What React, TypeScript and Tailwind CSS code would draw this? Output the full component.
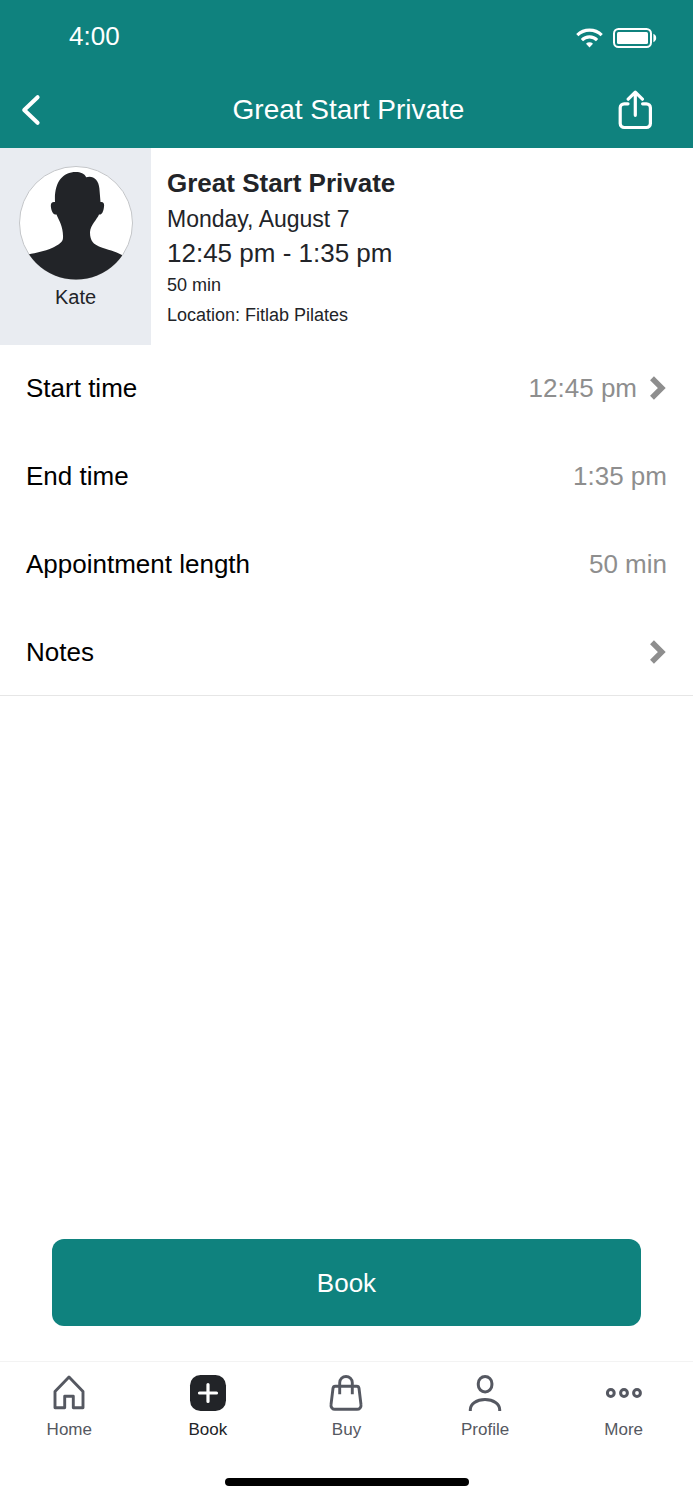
import type { ReactNode } from 'react'

interface RowProps {
  label: string
  value?: string
  onOpen?: () => void
}

interface Tab {
  label: string
  icon: ReactNode
  active?: boolean
}

const ROWS: RowProps[] = [
  { label: 'Start time', value: '12:45 pm', onOpen: () => {} },
  { label: 'End time', value: '1:35 pm' },
  { label: 'Appointment length', value: '50 min' },
  { label: 'Notes', onOpen: () => {} },
]

const TABS: Tab[] = [
  {
    label: 'Home',
    icon: (
      <svg width="38" height="38" viewBox="0 0 38 38" fill="none" stroke="currentColor" strokeWidth="2.9" strokeLinejoin="round">
        <path d="M5 17.500 19 3l14 14.500v16.200h-9.700V22.300h-8.600v11.400H5z" />
      </svg>
    ),
  },
  {
    label: 'Book',
    active: true,
    icon: (
      <svg width="38" height="38" viewBox="0 0 38 38" fill="none">
        <rect x="1" y="1" width="36" height="36" rx="10.5" fill="currentColor" />
        <path d="M19 10.500v17M10.500 19h17" stroke="#fff" strokeWidth="3.2" strokeLinecap="round" />
      </svg>
    ),
  },
  {
    label: 'Buy',
    icon: (
      <svg width="38" height="38" viewBox="0 0 38 38" fill="none" stroke="currentColor" strokeWidth="2.9">
        <path d="M8.4 12.2h21.2a2.4 2.4 0 0 1 2.4 2.1l2 16.400a4 4 0 0 1-4 4.600H8a4 4 0 0 1-4-4.600l2-16.400a2.400 2.400 0 0 1 2.400-2.100z" />
        <path d="M12.700 20.300V8.800a6.300 6.300 0 0 1 12.600 0v11.500" />
      </svg>
    ),
  },
  {
    label: 'Profile',
    icon: (
      <svg width="38" height="38" viewBox="0 0 38 38" fill="none" stroke="currentColor" strokeWidth="3">
        <rect x="12.3" y="2.5" width="13.6" height="15.4" rx="6.8" />
        <path d="M4.3 37v-1.2c0-6 6.2-10.2 14.7-10.2s14.700 4.200 14.700 10.200V37" />
      </svg>
    ),
  },
  {
    label: 'More',
    icon: (
      <svg width="38" height="38" viewBox="0 0 38 38" fill="none" stroke="currentColor" strokeWidth="3">
        <circle cx="5.8" cy="19" r="3.4" />
        <circle cx="19" cy="19" r="3.4" />
        <circle cx="32" cy="19" r="3.4" />
      </svg>
    ),
  },
]

function StatusBar() {
  return (
    <div className="flex items-center justify-between h-18 pl-[69px] pr-9">
      <span className="text-[26px] leading-8">4:00</span>
      <div className="flex items-center gap-2.5 pt-1">
        <svg width="27" height="20" viewBox="0 0 27 20" fill="none" stroke="#fff" strokeWidth="3.2">
          <path d="M1.3 7.2a17.4 17.4 0 0 1 24.4 0" />
          <path d="M5.9 12.1a10.8 10.8 0 0 1 15.2 0" />
          <path d="M10 15.8a5 5 0 0 1 7 0l-3.5 3.6z" fill="#fff" stroke="none" />
        </svg>
        <svg width="44" height="20" viewBox="0 0 44 20" fill="none">
          <rect x="1" y="1" width="37" height="18" rx="4.5" stroke="#fff" strokeWidth="2" />
          <rect x="4" y="4" width="31" height="12" rx="1.5" fill="#fff" />
          <path d="M40.4 5.8c1.6.6 2.8 2.2 2.8 4.2s-1.2 3.6-2.8 4.2z" fill="#fff" />
        </svg>
      </div>
    </div>
  )
}

function TitleBar() {
  return (
    <div className="grid grid-cols-[1fr_auto_1fr] items-center h-19 pl-5 pr-10">
      <button type="button" aria-label="Back" className="justify-self-start">
        <svg width="22" height="32" viewBox="0 0 22 32" fill="none" stroke="#fff" strokeWidth="4" strokeLinecap="round" strokeLinejoin="round">
          <path d="M17.600 3.200 4.200 16l13.400 12.800" />
        </svg>
      </button>
      <h1 className="pl-6 text-[28px] leading-8">Great Start Private</h1>
      <button type="button" aria-label="Share" className="justify-self-end">
        <svg width="36" height="40" viewBox="0 0 36 40" fill="none" stroke="#fff" strokeWidth="3.2" strokeLinecap="round" strokeLinejoin="round">
          <path d="M11 13.800H7.200a4 4 0 0 0-4 4v15.700a4 4 0 0 0 4 4h22.200a4 4 0 0 0 4-4V17.800a4 4 0 0 0-4-4h-3.800" />
          <path d="M18.300 25.300V2.200M11.200 9.200l7.100-7.100 7.100 7.100" />
        </svg>
      </button>
    </div>
  )
}

function Avatar() {
  return (
    <svg width="114" height="114" viewBox="0 0 114 114" role="img" aria-label="Kate">
      <defs>
        <clipPath id="avatar">
          <circle cx="57" cy="57" r="56.5" />
        </clipPath>
      </defs>
      <circle cx="57" cy="57" r="56.5" fill="#fff" />
      <circle cx="57" cy="57" r="56.5" fill="none" stroke="#c4c6c9" />
      <path
        clipPath="url(#avatar)"
        fill="#222428"
        d="M36 36C35 17 43 6 57 6c4.500 0 8.500 1.500 10.200 5.300 6.300-2.300 12.600 2.200 13.200 11.200L81.500 36c3.500-.5 4 2 3.400 5.500-.6 4-1.800 7.500-4.900 7-2 5-8.500 10.500-9 17.500-.2 9 4 12.500 9 14.500 9 3.500 16 4.500 23 8.500V114H9V88.500c9-2 16-3 24-6.500 6-3 11-5.500 11-10 .5-11-4-17.500-6.500-23.500-3 .5-4.900-2.500-5.500-7-.6-4 .4-6 4-5.500z"
      />
    </svg>
  )
}

function Chevron() {
  return (
    <svg width="18" height="26" viewBox="0 0 18 26" fill="none" stroke="#8e8e8e" strokeWidth="5.500">
      <path d="M3 3.200 12.800 13 3 22.800" strokeLinejoin="miter" />
    </svg>
  )
}

function Row({ label, value, onOpen }: RowProps) {
  const content = (
    <>
      <span className="text-black">{label}</span>
      <span className="flex items-center gap-3 text-[#8e8e8e]">
        {value}
        {onOpen && <Chevron />}
      </span>
    </>
  )
  const layout = 'flex w-full items-center justify-between min-h-[86px] px-[26px] text-[26px] leading-8 text-left'

  return (
    <li>
      {onOpen ? (
        <button type="button" onClick={onOpen} className={layout}>
          {content}
        </button>
      ) : (
        <div className={layout}>{content}</div>
      )}
    </li>
  )
}

export default function App() {
  return (
    <div className="flex flex-col min-h-screen bg-white text-[#222428] font-['Liberation_Sans',Arial,sans-serif]">
      <header className="bg-[#0f827e] text-white">
        <StatusBar />
        <TitleBar />
      </header>

      <main className="flex flex-1 flex-col">
        <section className="flex">
          <div className="flex flex-col items-center bg-[#e9ecf1] w-[151px] shrink-0 pt-[18px] pb-9">
            <Avatar />
            <p className="mt-[5px] text-xl leading-6">Kate</p>
          </div>
          <div className="pl-4 pt-[17px]">
            <h2 className="text-[26px] leading-9 font-bold">Great Start Private</h2>
            <p className="text-[23px] leading-9">Monday, August 7</p>
            <p className="text-[26px] leading-8">12:45 pm - 1:35 pm</p>
            <p className="text-lg leading-8">50 min</p>
            <p className="text-lg leading-7">Location: Fitlab Pilates</p>
          </div>
        </section>

        <ul className="flex flex-col gap-0.5 border-b border-[#e6e6e6]">
          {ROWS.map((row) => (
            <Row key={row.label} {...row} />
          ))}
        </ul>

        <div className="mt-auto px-[52px] pb-[35px]">
          <button type="button" className="w-full h-[87px] rounded-xl bg-[#0f827e] text-white text-[26px] leading-8">
            Book
          </button>
        </div>
      </main>

      <footer className="border-t border-[#f3f3f3]">
        <nav className="grid grid-cols-5 pt-3">
          {TABS.map((tab) => (
            <a
              key={tab.label}
              href={`#${tab.label.toLowerCase()}`}
              aria-current={tab.active ? 'page' : undefined}
              className={`flex flex-col items-center gap-1.5 ${tab.active ? 'text-[#222428]' : 'text-[#555861]'}`}
            >
              {tab.icon}
              <span className="text-[17px] leading-6">{tab.label}</span>
            </a>
          ))}
        </nav>
        <div className="mx-auto mt-9 mb-3.5 h-2 w-[244px] rounded-full bg-black" />
      </footer>
    </div>
  )
}
